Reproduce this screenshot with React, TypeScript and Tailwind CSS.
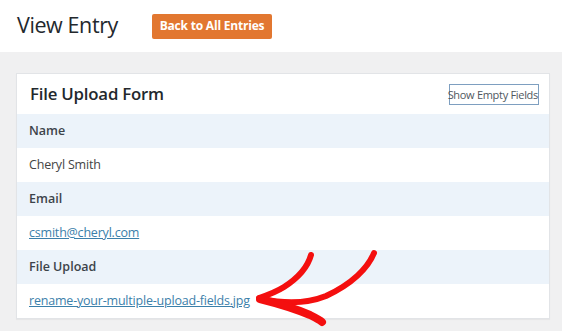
import React from "react"

const rows = [
  { label: "Name", value: "Cheryl Smith" },
  { label: "Email", value: "csmith@cheryl.com", link: true },
  { label: "File Upload", value: "rename-your-multiple-upload-fields.jpg", link: true },
]

function Arrow() {
  return (
    <svg className="absolute left-0 top-0 pointer-events-none" width="562" height="331" viewBox="0 0 562 331">
      <g fill="none" stroke="#f40f0f" strokeLinecap="round" strokeLinejoin="round">
        <path d="M311 255 C308 266 298 278 284 287 C276 292 268 295 259 298" strokeWidth="6" />
        <path d="M374 253 C368 268 352 284 326 296 C306 304 286 304 262 299" strokeWidth="6" />
        <path d="M260 299 C276 303 296 309 310 315 C316 318 320 320 322 322" strokeWidth="8" />
        <circle cx="261" cy="299" r="3.5" fill="#f40f0f" stroke="none" />
      </g>
    </svg>
  )
}

export default function App() {
  return (
    <div className="relative w-[562px] h-[331px] overflow-hidden bg-[#f0f0f1] font-['Open_Sans',sans-serif]">
      <div className="h-[52px] bg-white flex items-center pl-[17px]">
        <h1 className="w-[101px] text-[21.5px] leading-none text-[#23282d] tracking-[-0.4px] pb-[2px] whitespace-nowrap">View Entry</h1>
        <button className="ml-[34px] h-[25px] w-[120px] bg-[#e27730] text-white text-[12px] font-bold rounded-[2px] tracking-[-0.2px]">
          Back to All Entries
        </button>
      </div>
      <div className="pl-[16px] pt-[21px]">
        <div className="w-[534px] bg-white border border-[#e2e4e7] shadow-[0_1px_1px_rgba(0,0,0,0.04)]">
          <div className="h-[40px] flex items-center justify-between pl-[13px] pr-[10px]">
            <h2 className="text-[16.8px] font-semibold text-[#23282d] tracking-[-0.2px]">File Upload Form</h2>
            <button className="h-[21px] w-[90px] border border-[#7e9fc0] bg-white text-[11px] text-[#50575e] whitespace-nowrap leading-none px-0 tracking-[-0.3px] flex items-center justify-end">
              Show Empty Fields
            </button>
          </div>
          {rows.map((r) => (
            <div key={r.label}>
              <div className="h-[34px] bg-[#ecf3fa] flex items-center pl-[12px] text-[12.5px] font-semibold text-[#3c434a]">
                {r.label}
              </div>
              <div className="h-[34px] bg-white flex items-center pl-[12px] text-[12.5px] text-[#444] tracking-[-0.2px]">
                {r.link ? (
                  <a className="text-[#3b80aa] underline">{r.value}</a>
                ) : (
                  r.value
                )}
              </div>
            </div>
          ))}
        </div>
      </div>
      <Arrow />
    </div>
  )
}
